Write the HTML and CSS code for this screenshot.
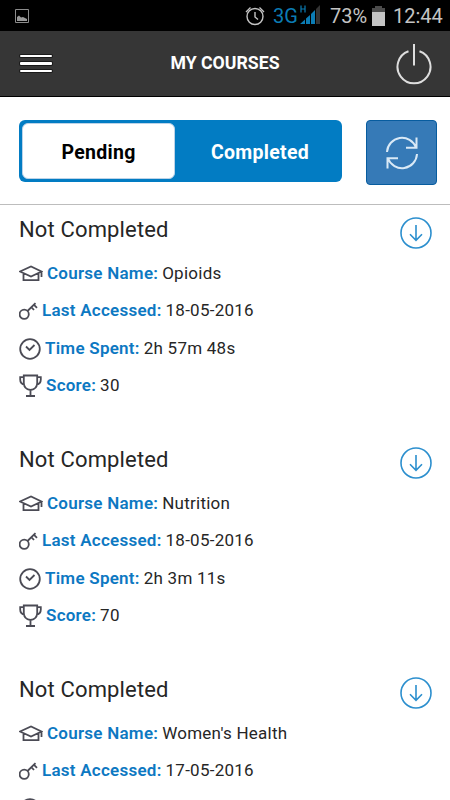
FILE: index.html
```html
<!DOCTYPE html>
<html lang="en">
<head>
    <meta charset="UTF-8">
    <meta name="viewport" content="width=device-width, initial-scale=1.0">
    <title>My Courses</title>
    <link rel="stylesheet" href="styles.css">
</head>
<body>
    <!-- Icons used by every course -->
    <svg class="icon-defs">
        <symbol id="icon-cap" viewBox="0 0 24 18">
            <path d="M1 7.5 12 2.5 22.5 7.5 12 12.5ZM4.5 9.3V16.2H19.5V9.3M22.5 7.5V13"/>
        </symbol>
        <symbol id="icon-key" viewBox="0 0 20 18">
            <circle cx="5.2" cy="12.3" r="4.6"/>
            <path d="M8.5 9 16.5 1.2M12.3 5.2 15 8M14.8 2.6 18 5.8"/>
        </symbol>
        <symbol id="icon-clock" viewBox="0 0 22 22">
            <circle cx="11" cy="11" r="9.8"/>
            <path d="M7 8.5 10.5 12 15.5 7"/>
        </symbol>
        <symbol id="icon-trophy" viewBox="0 0 24 24">
            <path d="M4.8 1.5H18.2V9C18.2 13 15.5 15.5 11.5 16 7.5 15.5 4.8 13 4.8 9ZM4.8 3.2H1.2V5.5C1.2 8.5 3 10.2 5.3 10.8M18.2 3.2H21.8V5.5C21.8 8.5 20 10.2 17.7 10.8M11.5 16V21.5M7 22H16"/>
        </symbol>
        <symbol id="icon-down" viewBox="0 0 32 32">
            <circle cx="16" cy="16" r="15"/>
            <path d="M16 8V23M10 17.3 16 23.3 22 17.3"/>
        </symbol>
    </svg>

    <!-- Status bar -->
    <div class="status-bar">
        <svg class="status-picture" width="14" height="14" viewBox="0 0 14 14">
            <path d="M.5.5H13.5V13.5H.5Z" fill="none" stroke="#8c8c8c"/>
            <path d="M2 12V8L4 6.5 6 8.5 8 8 12 10V12Z" fill="#999"/>
        </svg>
        <svg class="status-alarm" width="20" height="20" viewBox="0 0 20 20" fill="none" stroke="#c4c4c4" stroke-width="1.4">
            <circle cx="10" cy="10.5" r="8"/>
            <path d="M10 6V11L13 13.5M1 6 5.5 1.5M19 6 14.5 1.5"/>
        </svg>
        <span class="status-network">3G</span>
        <svg class="status-signal" width="21" height="20" viewBox="0 0 21 20">
            <path d="M1 .5V7.5M5 .5V7.5M1 4H5" fill="none" stroke="#0b7cb4" stroke-width="1.2"/>
            <path d="M0 19 5 14.5V19ZM6 13.5 10 10V19H6ZM11 9 15 5V19H11Z" fill="#0b7cb4"/>
            <path d="M16 4 20 0V19H16Z" fill="#333"/>
        </svg>
        <span class="status-percent">73%</span>
        <svg class="status-battery" width="13" height="20" viewBox="0 0 13 20">
            <path d="M3 0H10V2H13V7H0V2H3Z" fill="#4c4c4c"/>
            <path d="M0 6H13V20H0Z" fill="#c4c4c4"/>
        </svg>
        <span class="status-time">12:44</span>
    </div>

    <!-- Header -->
    <div class="header">
        <div class="menu">
            <span></span>
            <span></span>
            <span></span>
        </div>
        <h1>MY COURSES</h1>
        <svg class="power" width="36" height="42" viewBox="0 0 36 42">
            <path d="M12.5 8.2A16.5 16.5 0 1 0 23.5 8.2M18 1V22.5"/>
        </svg>
    </div>

    <!-- Tabs -->
    <div class="toolbar">
        <div class="tabs">
            <div class="tab active">Pending</div>
            <div class="tab tab-completed">Completed</div>
        </div>
        <div class="refresh">
            <svg width="34" height="34" viewBox="0 0 34 34">
                <path d="M2 16A15 15 0 0 1 31 11.5M31.5 1.5V11.8H21M32 18A15 15 0 0 1 3 22.5M2.5 32.5V22.2H13"/>
            </svg>
        </div>
    </div>

    <!-- Courses -->
    <div class="courses">
        <div class="course">
            <div class="course-head">
                <h2>Not Completed</h2>
                <svg class="down"><use href="#icon-down"/></svg>
            </div>
            <div class="row"><svg class="cap"><use href="#icon-cap"/></svg><b>Course Name:</b><span>Opioids</span></div>
            <div class="row"><svg class="key"><use href="#icon-key"/></svg><b>Last Accessed:</b><span>18-05-2016</span></div>
            <div class="row"><svg class="clock"><use href="#icon-clock"/></svg><b>Time Spent:</b><span>2h 57m 48s</span></div>
            <div class="row"><svg class="trophy"><use href="#icon-trophy"/></svg><b>Score:</b><span>30</span></div>
        </div>
        <div class="course">
            <div class="course-head">
                <h2>Not Completed</h2>
                <svg class="down"><use href="#icon-down"/></svg>
            </div>
            <div class="row"><svg class="cap"><use href="#icon-cap"/></svg><b>Course Name:</b><span>Nutrition</span></div>
            <div class="row"><svg class="key"><use href="#icon-key"/></svg><b>Last Accessed:</b><span>18-05-2016</span></div>
            <div class="row"><svg class="clock"><use href="#icon-clock"/></svg><b>Time Spent:</b><span>2h 3m 11s</span></div>
            <div class="row"><svg class="trophy"><use href="#icon-trophy"/></svg><b>Score:</b><span>70</span></div>
        </div>
        <div class="course last">
            <div class="course-head">
                <h2>Not Completed</h2>
                <svg class="down"><use href="#icon-down"/></svg>
            </div>
            <div class="row"><svg class="cap"><use href="#icon-cap"/></svg><b>Course Name:</b><span>Women's Health</span></div>
            <div class="row"><svg class="key"><use href="#icon-key"/></svg><b>Last Accessed:</b><span>17-05-2016</span></div>
            <div class="row"><svg class="clock"><use href="#icon-clock"/></svg></div>
        </div>
    </div>
</body>
</html>
```
FILE: styles.css
```css
/* Basic styling */
* {
    box-sizing: border-box;
}
body {
    font-family: Roboto, "Liberation Sans", sans-serif;
    display: flex;
    flex-direction: column;
    height: 800px;
    margin: 0;
    overflow: hidden;
    background-color: #fff;
    color: #262626;
}
svg {
    flex-shrink: 0;
}
.icon-defs {
    display: none;
}
/* Status bar */
.status-bar {
    display: flex;
    align-items: center;
    flex-shrink: 0;
    height: 31px;
    padding: 0 8px 0 15px;
    background-color: #000;
    color: #c4c4c4;
    font-size: 20px;
    white-space: nowrap;
}
.status-alarm {
    margin-left: auto;
}
.status-network {
    width: 24px;
    margin-left: 8px;
    color: #0b7cb4;
}
.status-signal {
    margin: -2px 0 0 3px;
}
.status-percent {
    width: 37px;
    margin-left: 9px;
}
.status-battery {
    margin-left: 5px;
}
.status-time {
    width: 49px;
    margin-left: 8px;
}
/* Header */
.header {
    display: flex;
    align-items: center;
    justify-content: space-between;
    flex-shrink: 0;
    height: 66px;
    padding: 0 18px 0 20px;
    background-color: #363636;
    border-bottom: 1px solid #000;
}
.header h1 {
    margin: 0 0 2px 2px;
    color: #fff;
    font-size: 17.7px;
    font-weight: bold;
}
.menu {
    display: flex;
    flex-direction: column;
    gap: 5px;
    width: 32px;
}
.menu span {
    height: 2.5px;
    background-color: #fff;
    border-radius: 1px;
    box-shadow: 0 0 0 1px #1a1a1a;
}
.power {
    fill: none;
    stroke: #dedede;
    stroke-width: 2;
}
/* Tabs */
.toolbar {
    display: flex;
    align-items: flex-start;
    justify-content: space-between;
    flex-shrink: 0;
    height: 108px;
    padding: 23px 13px 0 19px;
    border-bottom: 1px solid #bdbdbd;
}
.tabs {
    display: flex;
    width: 323px;
    height: 62px;
    padding: 3px;
    background-color: #027cc3;
    border-radius: 6px;
}
.tab {
    display: flex;
    align-items: center;
    justify-content: center;
    width: 153px;
    padding-top: 2px;
    color: #fff;
    font-size: 19.5px;
    font-weight: bold;
    letter-spacing: 0.3px;
}
.tab.active {
    flex-shrink: 0;
    background-color: #fff;
    border: 1px solid #bcd3e8;
    border-radius: 6px;
    color: #000;
}
.tab-completed {
    width: 170px;
    padding-left: 6px;
}
.refresh {
    display: flex;
    align-items: center;
    justify-content: center;
    width: 71px;
    height: 65px;
    background-color: #367ab7;
    border: 1px solid #075c9f;
    border-radius: 4px;
}
.refresh svg {
    fill: none;
    stroke: #d9e9f6;
    stroke-width: 2;
}
/* Course list */
.course {
    height: 230px;
    padding: 0 18px 0 19px;
}
.course.last {
    height: 135px;
    overflow: hidden;
}
.course-head {
    display: flex;
    align-items: center;
    justify-content: space-between;
    height: 49px;
}
.course-head h2 {
    margin: 0;
    font-size: 22px;
    font-weight: 400;
    letter-spacing: 0.15px;
}
.row {
    display: flex;
    align-items: center;
    height: 37.5px;
    font-size: 17px;
    letter-spacing: 0.25px;
    white-space: nowrap;
}
.row b {
    margin-right: 4px;
    color: #0d78c2;
    font-weight: 600;
}
.row svg {
    fill: none;
    stroke: #4b4b55;
    stroke-width: 1.8;
}
.cap {
    width: 24px;
    height: 18px;
    margin-right: 4px;
}
.key {
    width: 20px;
    height: 18px;
    margin: 1px 3px 0 0;
}
.clock {
    width: 22px;
    height: 22px;
    margin: 2px 4px 0 0;
}
.trophy {
    width: 24px;
    height: 24px;
    margin: 1px 3px 0 0;
}
.down {
    width: 32px;
    height: 32px;
    margin-top: 7px;
    fill: none;
    stroke: #2c8fce;
    stroke-width: 1.6;
}
```
